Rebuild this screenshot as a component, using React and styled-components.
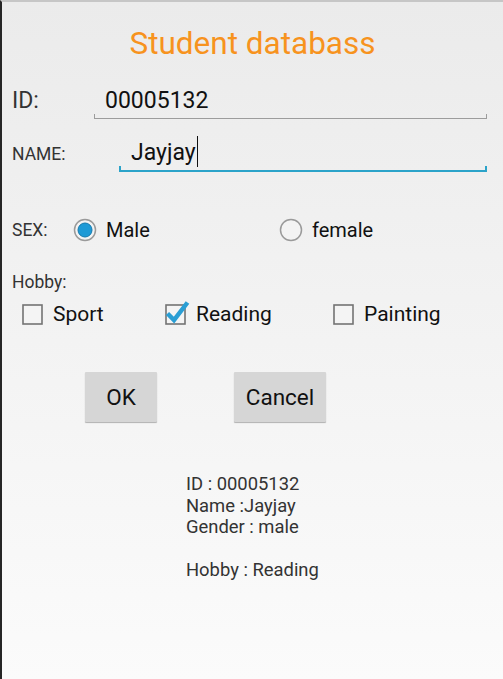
import React from "react"
import styled, { createGlobalStyle } from "styled-components"

const GlobalStyle = createGlobalStyle`
  html, body {
    margin: 0;
    padding: 0;
  }
  body {
    font-family: Roboto, "Liberation Sans", sans-serif;
  }
`

const Screen = styled.div`
  box-sizing: border-box;
  width: 503px;
  height: 679px;
  border-left: 2px solid #262626;
  border-top: 2px solid #c6c6c6;
  background: linear-gradient(#ebebeb, #fbfbfb);
  display: flex;
  flex-direction: column;
  overflow: hidden;
`
const Title = styled.div`
  margin-top: 24px;
  font-size: 31.5px;
  line-height: 36px;
  text-align: center;
  color: #f7931e;
`
const Row = styled.div`
  display: flex;
  align-items: center;
  margin-top: ${props => props.top}px;
  padding: 0 16px 0 10px;
`
const Label = styled.div`
  width: ${props => props.width}px;
  flex-shrink: 0;
  font-size: ${props => props.size || 17.5}px;
  color: #333333;
`
const Field = styled.div`
  position: relative;
  flex: 1;
  box-sizing: border-box;
  height: 37px;
  line-height: ${props => (props.focused ? 36 : 38)}px;
  padding-left: ${props => props.indent}px;
  font-size: 23px;
  color: #111111;
  border-bottom: ${props => (props.focused ? "2px solid #2ba3c9" : "1px solid #9c9c9c")};
  &::before,
  &::after {
    content: "";
    position: absolute;
    bottom: 0;
    width: ${props => (props.focused ? 2 : 1)}px;
    height: 4px;
    background: ${props => (props.focused ? "#2ba3c9" : "#9c9c9c")};
  }
  &::before {
    left: 0;
  }
  &::after {
    right: 0;
  }
`
const Caret = styled.span`
  display: inline-block;
  width: 1px;
  height: 31px;
  margin-left: 1px;
  vertical-align: -7px;
  background: #111111;
`
const Options = styled.div`
  display: grid;
  grid-template-columns: ${props => props.columns};
  align-items: center;
`
const Option = styled.label`
  display: flex;
  align-items: center;
  gap: ${props => props.gap}px;
  font-size: ${props => props.size}px;
  color: #111111;
  height: 30px;
`
const HobbyLabel = styled.div`
  margin-top: 27px;
  padding-left: 10px;
  font-size: 17.5px;
  line-height: 20px;
  color: #333333;
`
const CheckRow = styled.div`
  margin-top: 7px;
  padding-left: 20px;
`
const Buttons = styled.div`
  display: flex;
  gap: 77px;
  margin-top: 43px;
  padding-left: 83px;
`
const Button = styled.button`
  width: ${props => props.width}px;
  height: 50px;
  border: none;
  border-radius: 1px;
  background: #d6d6d6;
  box-shadow: 0 1px 1px rgba(0, 0, 0, 0.28);
  font-family: Roboto, "Liberation Sans", sans-serif;
  font-size: 22.5px;
  color: #111111;
  padding: 0;
`
const Result = styled.div`
  margin-top: 51px;
  padding-left: 184px;
  font-size: 18.4px;
  line-height: 21.5px;
  color: #333333;
`

const Radio = ({ checked }) => (
  <svg width="24" height="24" viewBox="0 0 24 24">
    <circle cx="12" cy="12" r="10.5" fill="#f3f3f3" stroke="#9a9a9a" strokeWidth="1.5" />
    {checked && <circle cx="12" cy="12" r="7" fill="#1e9ad6" stroke="#1479ad" strokeWidth="1" />}
  </svg>
)

const Checkbox = ({ checked }) => (
  <svg width="21" height="21" viewBox="0 0 21 21" style={{ overflow: "visible" }}>
    <rect x="1" y="1" width="19" height="19" fill="#f4f4f4" stroke="#737373" strokeWidth="1.6" />
    {checked && (
      <path d="M2.5 9.5 L9 16 L22.5 -1.5" fill="none" stroke="#2a9ed4" strokeWidth="4.5" />
    )}
  </svg>
)

const App = () => (
  <>
    <GlobalStyle />
    <Screen>
      <Title>Student databass</Title>
      <Row top={20}>
        <Label width={82} size={23}>ID:</Label>
        <Field indent={11}>00005132</Field>
      </Row>
      <Row top={16}>
        <Label width={107}>NAME:</Label>
        <Field indent={12} focused>
          Jayjay<Caret />
        </Field>
      </Row>
      <Row top={43}>
        <Label width={61}>SEX:</Label>
        <Options columns="206px auto">
          <Option gap={9} size={20}>
            <Radio checked />
            Male
          </Option>
          <Option gap={9} size={20}>
            <Radio />
            female
          </Option>
        </Options>
      </Row>
      <HobbyLabel>Hobby:</HobbyLabel>
      <CheckRow>
        <Options columns="143px 168px auto">
          <Option gap={10} size={21}>
            <Checkbox />
            Sport
          </Option>
          <Option gap={10} size={21}>
            <Checkbox checked />
            Reading
          </Option>
          <Option gap={10} size={21}>
            <Checkbox />
            Painting
          </Option>
        </Options>
      </CheckRow>
      <Buttons>
        <Button width={72}>OK</Button>
        <Button width={92}>Cancel</Button>
      </Buttons>
      <Result>
        ID : 00005132
        <br />
        Name :Jayjay
        <br />
        Gender : male
        <br />
        <br />
        Hobby : Reading
      </Result>
    </Screen>
  </>
)

export default App
